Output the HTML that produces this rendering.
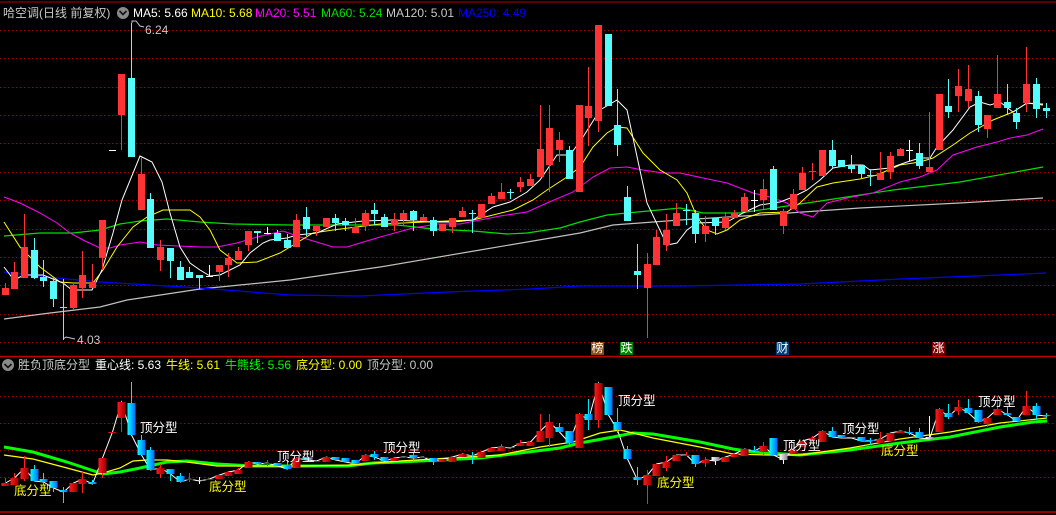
<!DOCTYPE html>
<html><head><meta charset="utf-8">
<style>
html,body{margin:0;padding:0;background:#000;}
body{width:1056px;height:515px;position:relative;overflow:hidden;font-family:"Liberation Sans","Noto Sans CJK SC",sans-serif;font-size:12px;}
.t{position:absolute;white-space:nowrap;line-height:14px;}
svg{position:absolute;left:0;top:0;}
</style></head><body>
<svg id="s" width="1056" height="515" viewBox="0 0 1056 515" xmlns="http://www.w3.org/2000/svg">
<defs>
<linearGradient id="gr" x1="0" x2="1" y1="0" y2="0"><stop offset="0" stop-color="#ff1a1a"/><stop offset="1" stop-color="#9a0000"/></linearGradient>
<linearGradient id="gc" x1="0" x2="1" y1="0" y2="0"><stop offset="0" stop-color="#00ffff"/><stop offset="1" stop-color="#0068ff"/></linearGradient>
<linearGradient id="gw" x1="0" x2="1" y1="0" y2="0"><stop offset="0" stop-color="#ffffff"/><stop offset="1" stop-color="#8a8a8a"/></linearGradient>
</defs>
<line x1="0" y1="2" x2="1056" y2="2" stroke="#b00000" stroke-width="1"/>
<line x1="0" y1="356.5" x2="1056" y2="356.5" stroke="#c00000" stroke-width="1.5"/>
<line x1="0" y1="512" x2="1056" y2="512" stroke="#c00000" stroke-width="1.5"/>
<g id="grid" stroke="#a00000" stroke-width="1" stroke-dasharray="1 3"></g>
<g id="lines" fill="none"></g>
<g id="cand"></g>
<g id="low"></g>
</svg>

<div class="t" style="left:3px;top:6px;color:#c8c8c8;">哈空调(日线 前复权)</div>
<div style="position:absolute;left:117px;top:7px;width:12px;height:12px;border-radius:6px;background:#8a8a8a;"></div>
<svg width="1056" height="515" style="pointer-events:none"><polyline points="119.5,11 123,14.5 126.5,11" fill="none" stroke="#111" stroke-width="1.6"/><polyline points="4.5,364 8,367.5 11.5,364" fill="none" stroke="#111" stroke-width="1.6"/></svg>
<div class="t" style="left:133px;top:6px;color:#fff;">MA5: 5.66</div>
<div class="t" style="left:191px;top:6px;color:#ffff00;">MA10: 5.68</div>
<div class="t" style="left:255px;top:6px;color:#ff00ff;">MA20: 5.51</div>
<div class="t" style="left:321px;top:6px;color:#00e000;">MA60: 5.24</div>
<div class="t" style="left:386px;top:6px;color:#c8c8c8;">MA120: 5.01</div>
<div class="t" style="left:458px;top:6px;color:#0000ff;">MA250: 4.49</div>
<div class="t" style="left:145px;top:23px;color:#c8c8c8;">6.24</div>
<div class="t" style="left:77px;top:333px;color:#c8c8c8;">4.03</div>

<div class="t" style="left:591px;top:342px;width:13px;height:13px;background:#8b4a10;color:#fff;font-size:12px;line-height:13px;text-align:center;">榜</div>
<div class="t" style="left:620px;top:342px;width:13px;height:13px;background:#008000;color:#fff;font-size:12px;line-height:13px;text-align:center;">跌</div>
<div class="t" style="left:776px;top:342px;width:13px;height:13px;background:#003c78;color:#fff;font-size:12px;line-height:13px;text-align:center;">财</div>
<div class="t" style="left:932px;top:342px;width:13px;height:13px;background:#800000;color:#fff;font-size:12px;line-height:13px;text-align:center;">涨</div>

<div style="position:absolute;left:2px;top:359px;width:12px;height:12px;border-radius:6px;background:#8a8a8a;"></div>
<svg width="1056" height="515" style="pointer-events:none"><polyline points="4.5,364 8,367.5 11.5,364" fill="none" stroke="#111" stroke-width="1.6"/></svg>
<div class="t" style="left:18px;top:358px;color:#c8c8c8;">胜负顶底分型</div>
<div class="t" style="left:95px;top:358px;color:#fff;">重心线: 5.63</div>
<div class="t" style="left:166px;top:358px;color:#ffff00;">牛线: 5.61</div>
<div class="t" style="left:225px;top:358px;color:#00ff00;">牛熊线: 5.56</div>
<div class="t" style="left:296px;top:358px;color:#ffff00;">底分型: 0.00</div>
<div class="t" style="left:367px;top:358px;color:#c8c8c8;">顶分型: 0.00</div>

<div class="t" style="left:14px;top:484px;color:#ffff00;font-size:12.5px;">底分型</div>
<div class="t" style="left:140px;top:421px;color:#fff;font-size:12.5px;">顶分型</div>
<div class="t" style="left:209px;top:480px;color:#ffff00;font-size:12.5px;">底分型</div>
<div class="t" style="left:277px;top:450px;color:#fff;font-size:12.5px;">顶分型</div>
<div class="t" style="left:383px;top:441px;color:#fff;font-size:12.5px;">顶分型</div>
<div class="t" style="left:618px;top:394px;color:#fff;font-size:12.5px;">顶分型</div>
<div class="t" style="left:657px;top:476px;color:#ffff00;font-size:12.5px;">底分型</div>
<div class="t" style="left:783px;top:439px;color:#fff;font-size:12.5px;">顶分型</div>
<div class="t" style="left:842px;top:422px;color:#fff;font-size:12.5px;">顶分型</div>
<div class="t" style="left:881px;top:444px;color:#ffff00;font-size:12.5px;">底分型</div>
<div class="t" style="left:978px;top:395px;color:#fff;font-size:12.5px;">顶分型</div>

<script>
var NS="http://www.w3.org/2000/svg";
function el(p,n,a){var e=document.createElementNS(NS,n);for(var k in a)e.setAttribute(k,a[k]);p.appendChild(e);return e;}
var G=document.getElementById('grid');
for(var k=0;k<=11;k++){var y=Math.round(30+k*28.36)+0.5;el(G,'line',{x1:0,y1:y,x2:1056,y2:y});}
[396,423,450,477].forEach(function(y){el(G,'line',{x1:0,y1:y+0.5,x2:1056,y2:y+0.5});});
var L=document.getElementById('lines');
function pl(pts,c,w){el(L,'polyline',{points:pts,stroke:c,'stroke-width':w||1,fill:'none'});}
// main MAs
pl("4,319 50,313 100,307 127,300 167,294 200,289 240,285 290,280 380,267 480,250 580,233 613,225 680,220 760,215 860,208 960,203 1043,198","#c0c0c0",1.2);
pl("4,272 67,279 100,282 150,285 200,288 290,295 360,296 447,292 530,289 580,286 680,286 800,284 900,279 1000,275 1046,273","#0000ff",1.2);
pl("4,236 40,233 73,233 100,230 120,224 140,221 167,219 200,222 233,224 290,225 397,225 433,229 473,231 507,234 527,233 560,228 580,222 607,215 627,213 680,208 703,213 740,213 787,206 827,200 893,190 960,182 1043,167","#00e000",1.2);
pl("4,197 20,203 40,213 57,223 70,233 83,240 100,248 110,248 120,245 140,242 157,245 200,247 217,247 237,243 257,237 283,231 300,237 333,247 347,247 360,243 380,237 413,228 437,224 460,224 480,220 500,216 527,212 547,203 573,192 593,177 610,168 627,167 643,170 663,173 680,173 703,178 727,183 753,193 770,197 787,203 800,213 813,217 827,203 847,198 873,193 900,182 920,177 937,170 953,155 977,147 997,142 1010,138 1027,135 1043,129","#ff00ff",1);
pl("4,222 20,247 40,267 60,282 73,283 93,283 103,270 117,247 133,227 147,217 163,210 190,210 200,217 210,230 220,250 237,263 257,262 280,253 313,233 333,230 380,224 447,221 473,220 513,210 533,200 547,190 567,177 580,167 593,147 607,133 617,127 627,128 643,153 660,170 677,180 687,193 697,217 707,230 717,234 727,230 740,220 760,213 787,212 800,203 817,187 833,183 860,179 877,175 900,165 920,162 933,158 953,145 970,133 993,120 1013,112 1027,103 1043,104","#ffff00",1);
pl("4,267 14,280 24,275 43,275 63,283 72,290 92,290 102,270 113,233 122,200 140,156 152,162 162,182 170,213 180,247 190,263 200,270 210,276 220,275 240,265 250,253 263,243 270,240 287,238 297,235 317,233 337,224 363,221 393,220 433,222 453,222 473,220 493,207 510,202 527,192 540,180 557,155 570,155 583,137 600,110 617,100 627,110 647,203 667,245 677,243 687,230 697,223 727,222 743,213 760,205 780,202 793,197 807,190 820,180 833,168 850,165 863,165 870,170 890,168 907,162 920,158 930,158 937,147 953,130 970,107 980,102 990,105 1000,102 1013,112 1027,103 1043,105","#ffffff",1);
// lower lines
pl("4,447 33,452 67,462 103,474 120,472 140,468 167,462 187,461 217,464 253,466 300,466 347,466 373,463 400,462 480,458 520,453 560,448 580,443 613,437 633,433 653,434 700,442 733,449 753,452 800,455 850,450 900,443 950,437 1000,427 1033,422 1047,421","#00ff00",3);
pl("4,455 33,459 67,468 93,475 103,473 120,468 133,461 147,460 167,460 187,462 217,466 300,466 350,465 400,461 500,455 540,447 573,442 600,433 620,430 633,433 653,438 700,447 733,454 767,455 800,455 850,448 900,439 950,432 1000,423 1047,418","#ffff00",1.2);
// labels connectors
pl("132,23 132,21 136,21 140,26 144,27","#c8c8c8",1);
pl("63,339 66,337 75,339","#c8c8c8",1);

var M="r 288 295 283 295|r 272 289 262 289|r 247 278 214 278|c 250 278 238 279|c 277 281 260 287|c 281 299 278 307|c 307 308 279 340|r 285 308 284 310|r 275 288 251 298|r 282 288 264 288|r 220 258 220 270|w 150 151 150 151|r 74 115 74 150|c 78 157 23 157|r 174 210 157 210|c 199 248 193 248|r 247 260 240 271|c 248 261 248 278|c 267 280 261 280|c 272 278 267 278|c 275 278 275 289|w 276 277 265 277|r 265 272 265 281|r 258 265 253 277|r 251 260 247 260|r 231 245 231 251|c 231 233 231 243|w 233 234 227 234|c 233 241 230 241|c 240 248 234 248|r 220 247 214 247|c 217 229 207 236|r 226 231 226 236|r 218 227 218 227|c 218 223 214 231|c 221 225 218 231|r 227 233 218 233|r 213 226 210 231|c 210 214 203 225|c 217 227 214 227|r 220 225 213 231|r 213 220 210 225|c 211 220 210 231|r 217 221 214 221|c 220 231 217 236|r 224 231 224 231|r 218 227 218 233|r 211 217 207 217|c 213 214 210 233|r 204 218 204 218|r 196 204 193 204|r 192 199 183 199|c 192 193 189 199|r 182 187 177 192|r 179 186 174 186|r 149 177 105 177|r 128 165 105 192|r 140 150 132 162|c 150 179 146 179|r 105 192 105 192|r 106 118 67 146|r 25 121 25 132|c 34 106 34 106|c 125 145 89 156|c 197 221 186 221|c 271 275 244 289|r 264 288 253 338|r 237 265 230 265|r 230 245 214 251|r 213 226 203 226|c 210 211 204 225|c 213 234 210 243|r 226 234 216 242|c 218 226 218 235|r 217 228 212 230|r 213 218 210 218|r 197 212 193 212|w 200 201 190 212|r 189 200 179 209|c 169 210 166 210|r 211 226 209 234|r 194 209 189 209|r 173 190 167 190|r 171 172 163 180|r 150 176 150 176|c 150 166 140 168|c 160 167 160 167|c 165 169 155 173|c 165 174 165 179|c 175 176 169 186|r 173 180 152 180|r 156 172 152 179|r 149 156 148 156|w 150 151 140 161|c 153 166 143 169|r 167 172 112 172|r 94 150 94 150|c 106 112 79 118|r 86 96 69 112|r 89 101 65 108|c 96 125 91 132|r 115 129 115 138|r 94 108 55 108|c 102 108 84 115|c 113 122 108 129|r 84 103 47 112|c 84 109 78 118|c 108 111 103 118";
var W="r 483 486 478 486|r 478 485 473 485|r 468 479 456 481|c 469 481 465 481|c 479 482 473 485|c 481 488 481 492|c 490 492 487 503|r 483 492|r 479 484 471 493|c 482 484 480 484|r 458 473 458 478|r 432 433|r 402 418 402 432|c 403 435 382 435|c 440 455 435 455|c 450 470 447 470|r 468 474 464 478|c 469 474 469 481|c 476 482 473 482|r 479 480 473 482|w 480 481 477 484|r 479 480|r 475 479|r 472 476|r 470 474 468 474|r 462 468|c 462 464|r 463 464 460 466|c 463 466|c 465 469 460 469|r 458 468|c 457 460|r 461 462|r 457 462|c 457 460|c 458 462|c 460 464|r 455 461|c 454 457 451 460|c 457 461|r 458 461|r 457 458|c 455 458 452 462|r 457 458|c 458 462 458 465|r 459 462|r 457 462|r 454 457|c 455 456 452 464|r 452 458|r 448 452|r 447 451 444 451|c 447 448|r 443 446 440 446|r 442 446|r 431 442 414 442|r 422 438 414 447|c 427 432 423 432|c 431 443|r 414 448|c 414 420 399 430|r 383 420 383 428|c 387 415|c 422 430 408 433|c 449 459 446 459|c 477 480 467 485|r 475 485 470 504|r 464 476|r 462 468 456 471|r 455 461|r 455 456 452 456|c 455 464 455 467|r 460 463 457 467|w 457 461 457 465|r 457 462|r 454 457|r 449 456|c 450 451 446 451|r 446 452 442 455|c 438 455|w 454 460 454 464|r 449 454|r 441 447|r 438 439 436 441|r 431 442|c 431 437 427 437|c 435 438|c 437 438|c 437 441|c 440 441 438 445|r 439 443 432 443|r 433 441|r 431 433|c 432 433 427 435|c 432 438 428 438|w 437 439 416 439|r 409 432|c 413 417 404 419|r 407 411 400 415|c 408 413 399 413|c 410 422|r 418 424 418 427|r 409 415 396 415|c 413 415 407 415|c 417 421|r 406 415 391 415|c 406 415 403 420|c 415 416 413 417";
function parse(s){return s.split('|').map(function(r){var a=r.split(' ');var t=+a[1],b=+a[2];return{k:a[0],t:t,b:b,h:a[3]?+a[3]:t,l:a[4]?+a[4]:b};});}
function draw(g,d,w,fills,wicks,zig){
  var pts=[];
  d.forEach(function(c,i){
    var x=4.5+i*9.73;
    var xc=Math.round(x)+0.5;
    el(g,'line',{x1:xc,y1:c.h,x2:xc,y2:c.l,stroke:wicks[c.k],'stroke-width':1});
    var h=Math.max(1,c.b-c.t);
    el(g,'rect',{x:Math.round(x)-w/2+0.5,y:c.t,width:w,height:h,fill:fills[c.k]});
    pts.push(xc+','+(c.k=='r'?c.t:c.b));
  });
  if(zig)el(g,'polyline',{points:pts.join(' '),stroke:'#fff','stroke-width':1,fill:'none',opacity:0.85});
}
var C=document.getElementById('cand');
draw(C,parse(M),7,{r:'#ff3333',c:'#54fcfc',w:'#ffffff'},{r:'#ff3333',c:'#54fcfc',w:'#ffffff'},false);
var LW=document.getElementById('low');
var ld=parse(W);
// zigzag first (under candles)
var zp=ld.map(function(c,i){return (Math.round(4.5+i*9.73)+0.5)+','+(c.k=='r'?c.t:c.b);}).join(' ');
el(LW,'polyline',{points:zp,stroke:'#ffffff','stroke-width':1,fill:'none'});
draw(LW,ld,8,{r:'url(#gr)',c:'url(#gc)',w:'url(#gw)'},{r:'#ff2020',c:'#00e8ff',w:'#ffffff'},false);
</script>
</body></html>
